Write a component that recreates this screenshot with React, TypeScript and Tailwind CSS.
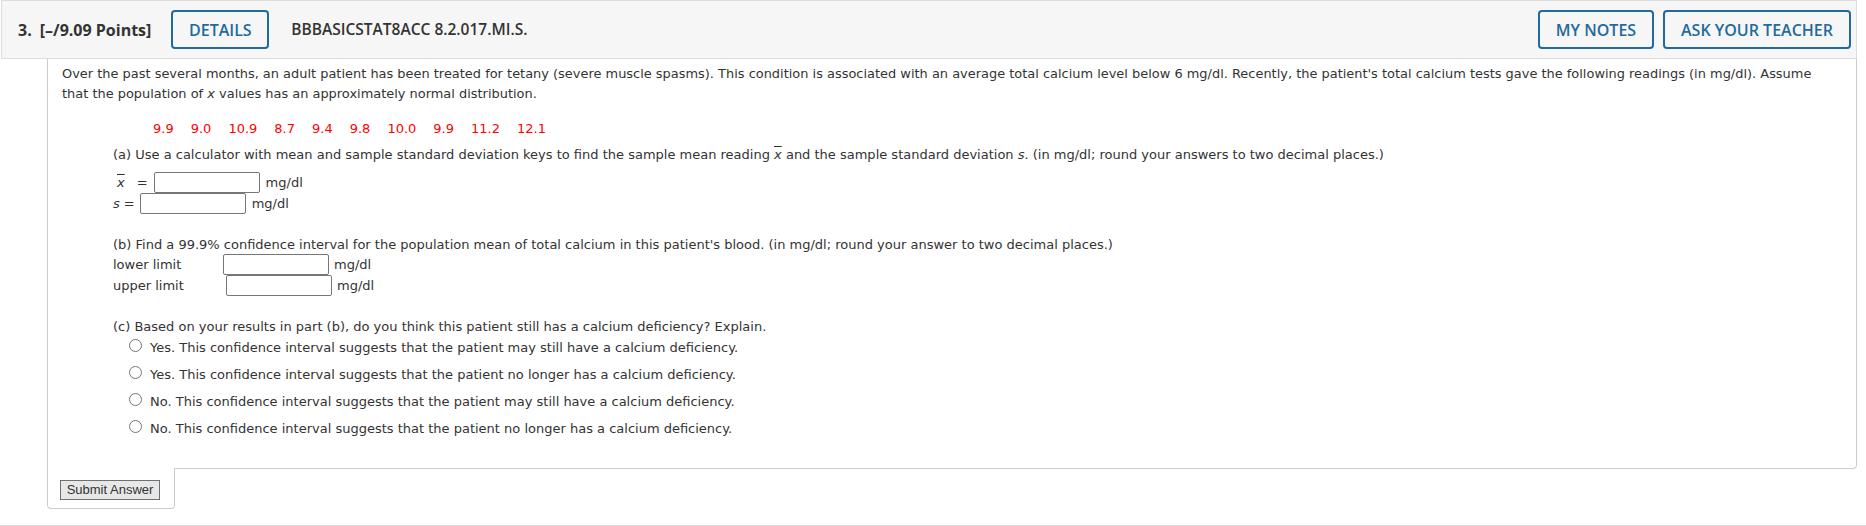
import React from "react";

const Radio = () => (
  <span className="inline-block w-[13px] h-[13px] rounded-full border border-[#767676] bg-white shrink-0" />
);

const Field = ({ className = "" }: { className?: string }) => (
  <input
    type="text"
    className={`w-[106px] h-[21px] border border-[#767676] rounded-[2px] bg-white ${className}`}
  />
);

const HeaderButton = ({ label, w }: { label: string; w: string }) => (
  <div
    className={`${w} h-[39px] border-2 border-[#1f6a9e] rounded-[4px] flex items-center justify-center text-[#1f6a9e] text-[16px] font-semibold`}
  >
    {label}
  </div>
);

export default function App() {
  const nums = ["9.9", "9.0", "10.9", "8.7", "9.4", "9.8", "10.0", "9.9", "11.2", "12.1"];
  const options = [
    "Yes. This confidence interval suggests that the patient may still have a calcium deficiency.",
    "Yes. This confidence interval suggests that the patient no longer has a calcium deficiency.",
    "No. This confidence interval suggests that the patient may still have a calcium deficiency.",
    "No. This confidence interval suggests that the patient no longer has a calcium deficiency.",
  ];
  return (
    <div className="w-[1866px] h-[526px] bg-white overflow-hidden text-[#333333] font-['DejaVu_Sans',sans-serif] text-[13px]">
      {/* Header */}
      <div className="ml-[1px] w-[1856px] h-[59px] bg-[#f6f6f6] border border-[#dddddd] flex items-center pl-[16px] pr-[5px] font-['Open_Sans',sans-serif] text-[#333333]">
        <span className="text-[16px] font-bold">3.</span>
        <span className="ml-[8px] text-[16px] font-bold">[–/9.09 Points]</span>
        <div className="ml-[20px]">
          <HeaderButton label="DETAILS" w="w-[98px]" />
        </div>
        <span className="ml-[22px] text-[15.5px] font-semibold">BBBASICSTAT8ACC 8.2.017.MI.S.</span>
        <div className="ml-auto flex gap-[9px]">
          <HeaderButton label="MY NOTES" w="w-[116px]" />
          <HeaderButton label="ASK YOUR TEACHER" w="w-[188px]" />
        </div>
      </div>

      {/* Question body */}
      <div className="ml-[47px] w-[1810px] h-[410px] border-x border-b border-[#cccccc] rounded-br-[4px] pl-[14px] pt-[5px] pr-[14px]">
        <p className="leading-[20px] text-[12.95px]">
          Over the past several months, an adult patient has been treated for tetany (severe muscle spasms). This
          condition is associated with an average total calcium level below 6 mg/dl. Recently, the patient's total
          calcium tests gave the following readings (in mg/dl). Assume
          <br />
          that the population of <i>x</i> values has an approximately normal distribution.
        </p>
        <div className="mt-[15px] ml-[91px] flex gap-[17px] leading-[20px] text-[#ff0000]">
          {nums.map((n, i) => (
            <span key={i}>{n}</span>
          ))}
        </div>

        <div className="ml-[51px]">
          <p className="mt-[6px] leading-[20px]">
            (a) Use a calculator with mean and sample standard deviation keys to find the sample mean reading{" "}
            <span className="italic overline">x</span> and the sample standard deviation <i>s</i>. (in mg/dl; round
            your answers to two decimal places.)
          </p>
          <div className="mt-[7px] h-[21px] flex items-center">
            <span className="ml-[4px] italic overline">x</span>
            <span className="ml-[12px]">=</span>
            <Field className="ml-[6px]" />
            <span className="ml-[6px]">mg/dl</span>
          </div>
          <div className="h-[21px] flex items-center">
            <span className="italic">s</span>
            <span className="ml-[4px]">=</span>
            <Field className="ml-[5px]" />
            <span className="ml-[6px]">mg/dl</span>
          </div>

          <p className="mt-[21px] leading-[20px]">
            (b) Find a 99.9% confidence interval for the population mean of total calcium in this patient's blood. (in
            mg/dl; round your answer to two decimal places.)
          </p>
          <div className="-mt-px h-[21px] flex items-center">
            <span className="w-[110px]">lower limit</span>
            <Field />
            <span className="ml-[5px]">mg/dl</span>
          </div>
          <div className="h-[21px] flex items-center">
            <span className="w-[113px]">upper limit</span>
            <Field />
            <span className="ml-[5px]">mg/dl</span>
          </div>

          <p className="mt-[21px] leading-[20px]">
            (c) Based on your results in part (b), do you think this patient still has a calcium deficiency? Explain.
          </p>
          <div className="flex flex-col gap-[6px]">
            {options.map((o, i) => (
              <div key={i} className="h-[21px] flex items-center">
                <span className="ml-[16px]">
                  <Radio />
                </span>
                <span className="ml-[8px]">{o}</span>
              </div>
            ))}
          </div>
        </div>
      </div>

      {/* Submit tab */}
      <div className="ml-[47px] -mt-px w-[128px] h-[41px] bg-white border-x border-b border-[#cccccc] rounded-b-[4px] pl-[12px] pt-[12px]">
        <button className="w-[100px] h-[20px] bg-[#e7e7e7] border border-[#707070] font-['Liberation_Sans',sans-serif] text-[13px] leading-[18px] text-[#333333]">
          Submit Answer
        </button>
      </div>

      <div className="mt-[16px] h-px w-full bg-[#dddddd]" />
    </div>
  );
}
